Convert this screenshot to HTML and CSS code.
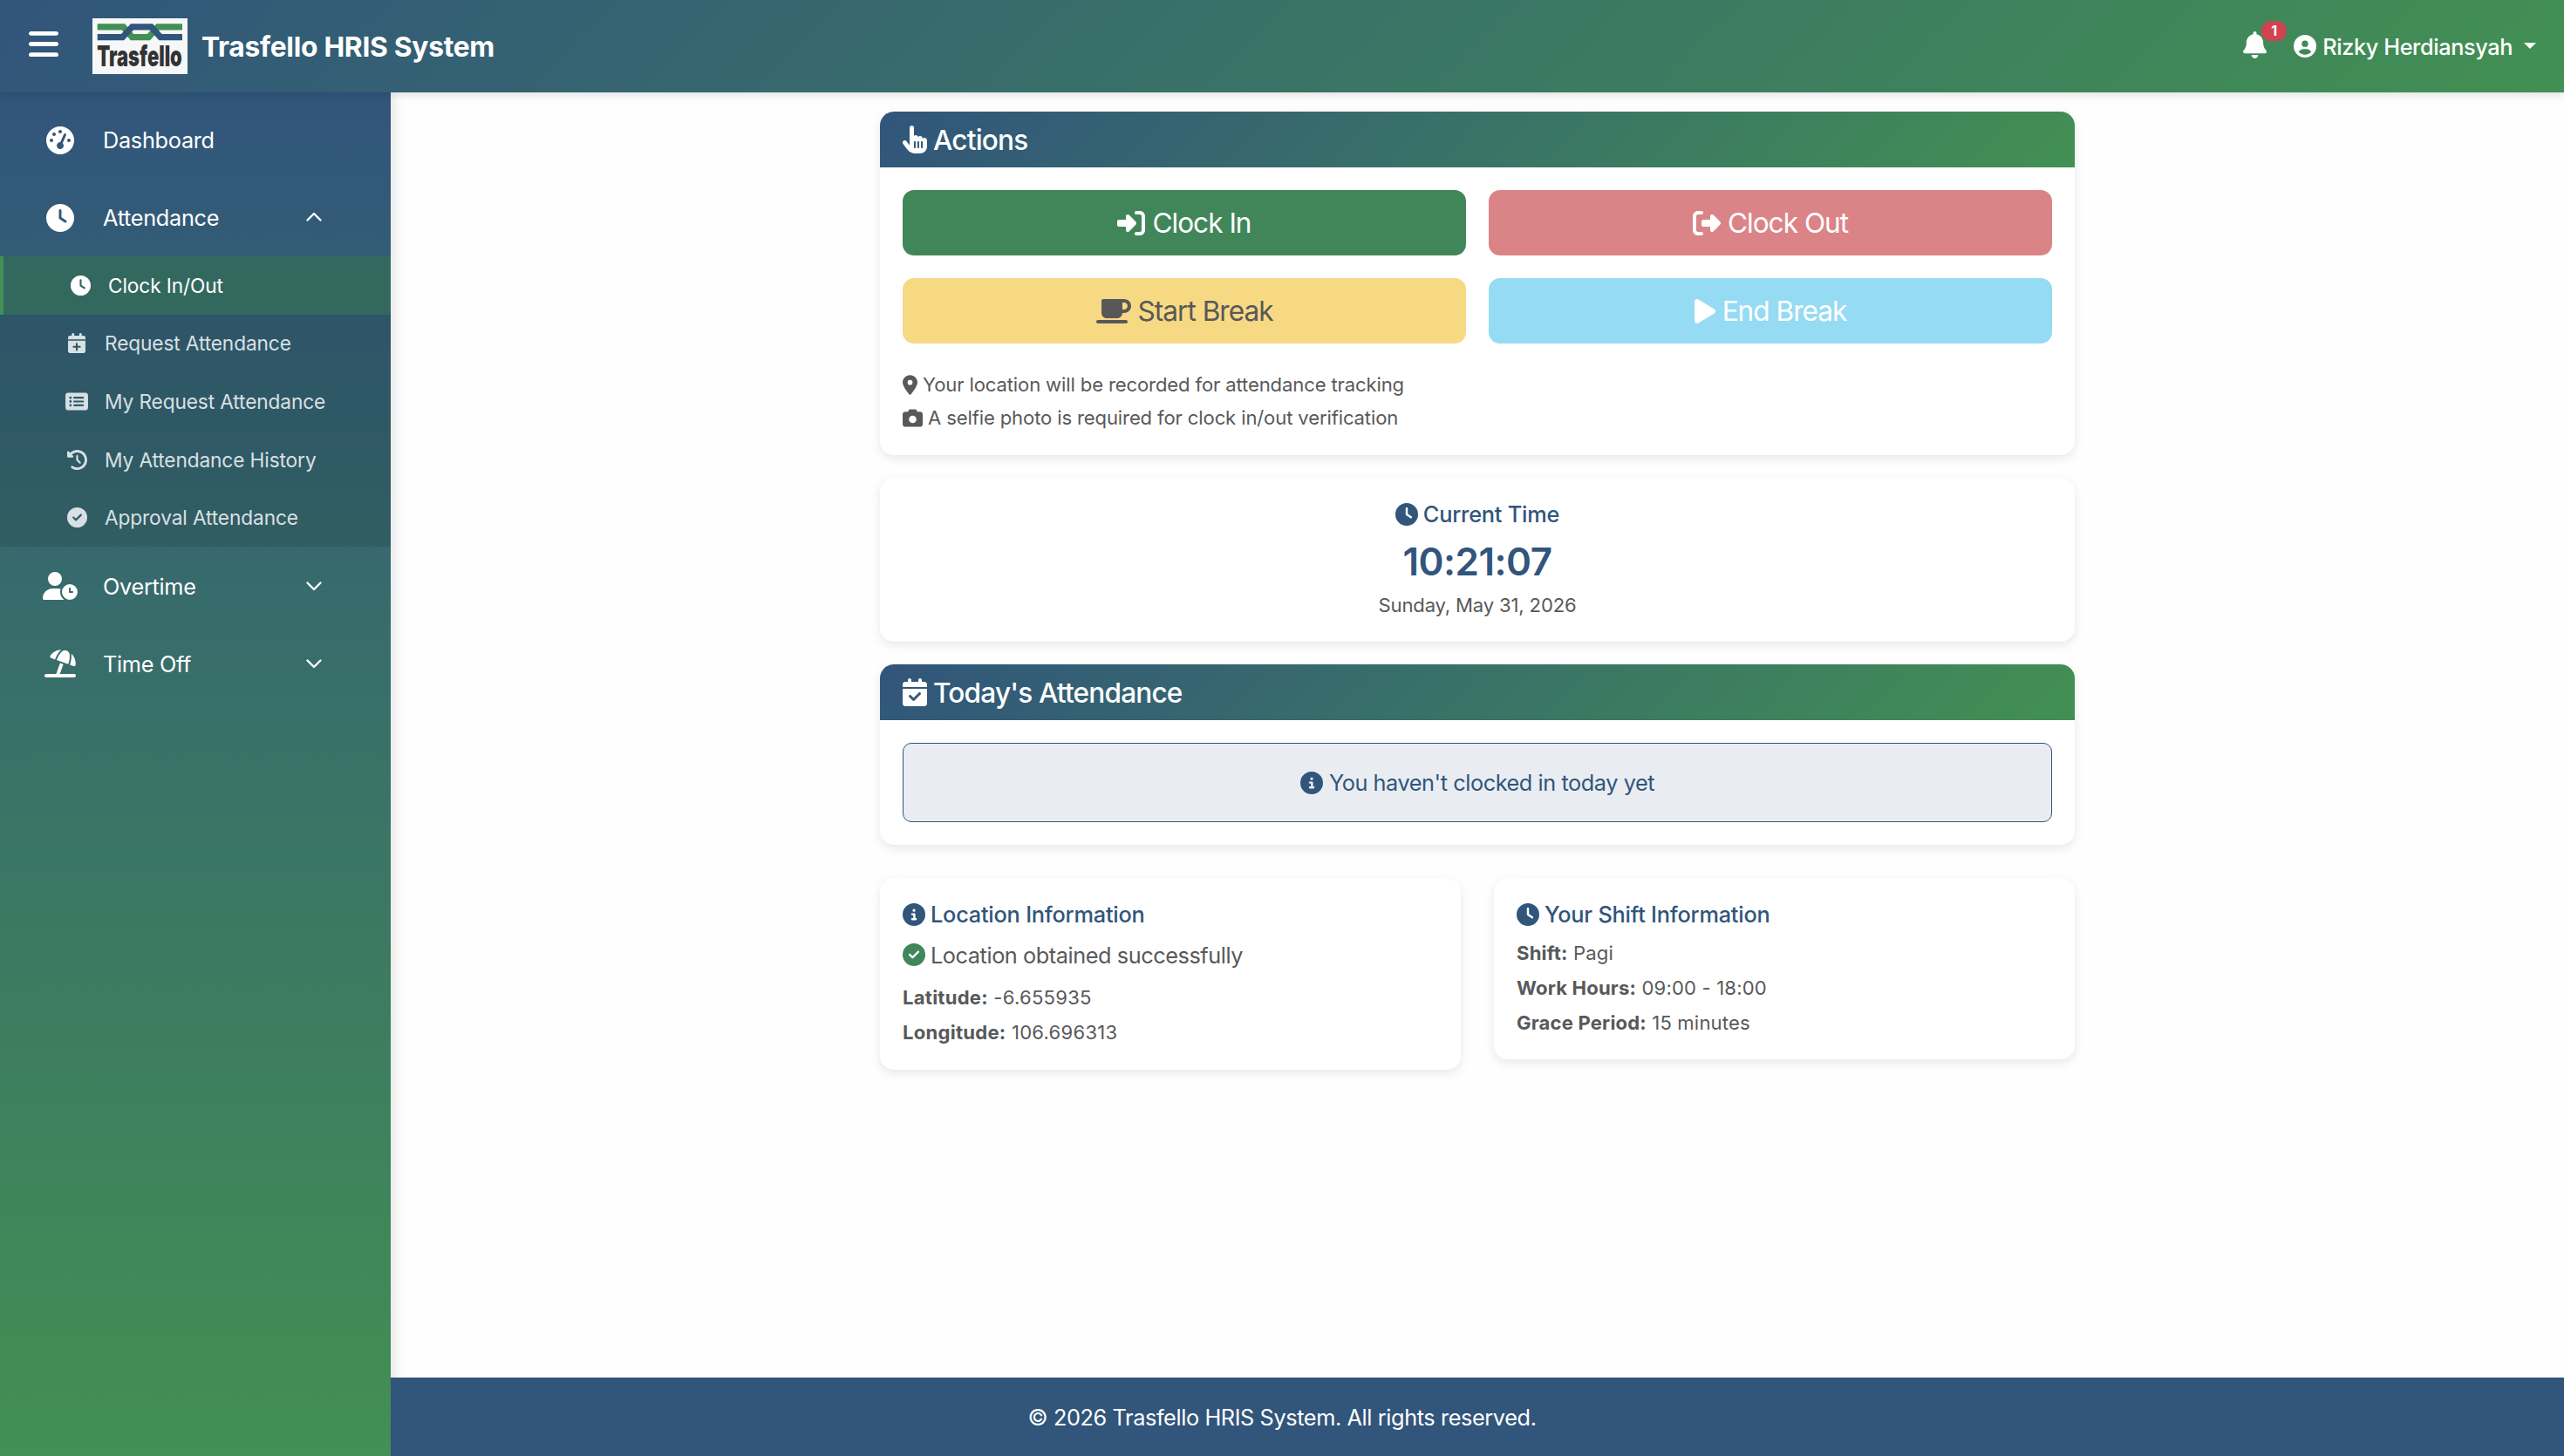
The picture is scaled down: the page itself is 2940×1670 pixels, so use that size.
FILE: index.html
```html
<!DOCTYPE html>
<html lang="en">
<head>
<meta charset="utf-8">
<title>Trasfello HRIS System</title>
<link rel="stylesheet" href="styles.css">
</head>
<body>
<svg class="sprite" aria-hidden="true">
  <symbol id="bars" viewBox="0 0 448 512"><path d="M0 96C0 78.3 14.3 64 32 64H416c17.7 0 32 14.3 32 32s-14.3 32-32 32H32C14.3 128 0 113.7 0 96zM0 256c0-17.7 14.3-32 32-32H416c17.7 0 32 14.3 32 32s-14.3 32-32 32H32c-17.7 0-32-14.3-32-32zM448 416c0 17.7-14.3 32-32 32H32c-17.7 0-32-14.3-32-32s14.3-32 32-32H416c17.7 0 32 14.3 32 32z"/></symbol>
  <symbol id="clock" viewBox="0 0 512 512"><path d="M256 0a256 256 0 1 1 0 512A256 256 0 1 1 256 0zM232 120V256c0 8 4 15.5 10.7 20l96 64c11 7.4 25.9 4.4 33.3-6.7s4.4-25.9-6.7-33.3L280 243.2V120c0-13.3-10.7-24-24-24s-24 10.7-24 24z"/></symbol>
  <symbol id="gauge" viewBox="0 0 512 512"><path d="M0 256a256 256 0 1 1 512 0A256 256 0 1 1 0 256zM288 96a32 32 0 1 0 -64 0 32 32 0 1 0 64 0zM256 416c35.3 0 64-28.7 64-64c0-17.4-6.9-33.1-18.1-44.6L366 161.7c5.3-12.1-.2-26.3-12.3-31.6s-26.3 .2-31.6 12.3L257.9 288c-.6 0-1.3 0-1.9 0c-35.3 0-64 28.7-64 64s28.7 64 64 64zM176 144a32 32 0 1 0 -64 0 32 32 0 1 0 64 0zM96 288a32 32 0 1 0 0-64 32 32 0 1 0 0 64zm352-32a32 32 0 1 0 -64 0 32 32 0 1 0 64 0z"/></symbol>
  <symbol id="calendar-plus" viewBox="0 0 448 512"><path d="M96 32V64H48C21.5 64 0 85.5 0 112v48H448V112c0-26.5-21.5-48-48-48H352V32c0-17.7-14.3-32-32-32s-32 14.3-32 32V64H160V32c0-17.7-14.3-32-32-32S96 14.3 96 32zM448 192H0V464c0 26.5 21.5 48 48 48H400c26.5 0 48-21.5 48-48V192zM224 248c13.3 0 24 10.7 24 24v56h56c13.3 0 24 10.7 24 24s-10.7 24-24 24H248v56c0 13.3-10.7 24-24 24s-24-10.7-24-24V376H144c-13.3 0-24-10.7-24-24s10.7-24 24-24h56V272c0-13.3 10.7-24 24-24z"/></symbol>
  <symbol id="calendar-check" viewBox="0 0 448 512"><path d="M96 32V64H48C21.5 64 0 85.5 0 112v48H448V112c0-26.5-21.5-48-48-48H352V32c0-17.7-14.3-32-32-32s-32 14.3-32 32V64H160V32c0-17.7-14.3-32-32-32S96 14.3 96 32zM448 192H0V464c0 26.5 21.5 48 48 48H400c26.5 0 48-21.5 48-48V192zM329 297L217 409c-9.4 9.4-24.6 9.4-33.9 0l-64-64c-9.4-9.4-9.4-24.6 0-33.9s24.6-9.4 33.9 0l47 47 95-95c9.4-9.4 24.6-9.4 33.9 0s9.4 24.6 0 33.9z"/></symbol>
  <symbol id="list" viewBox="0 0 576 512"><path d="M0 96C0 60.7 28.7 32 64 32H512c35.3 0 64 28.7 64 64V416c0 35.3-28.7 64-64 64H64c-35.3 0-64-28.7-64-64V96zM128 288a32 32 0 1 0 0-64 32 32 0 1 0 0 64zm32-128a32 32 0 1 0 -64 0 32 32 0 1 0 64 0zM128 384a32 32 0 1 0 0-64 32 32 0 1 0 0 64zm96-248c-13.3 0-24 10.7-24 24s10.7 24 24 24H448c13.3 0 24-10.7 24-24s-10.7-24-24-24H224zm0 96c-13.3 0-24 10.7-24 24s10.7 24 24 24H448c13.3 0 24-10.7 24-24s-10.7-24-24-24H224zm0 96c-13.3 0-24 10.7-24 24s10.7 24 24 24H448c13.3 0 24-10.7 24-24s-10.7-24-24-24H224z"/></symbol>
  <symbol id="history" viewBox="0 0 512 512"><path d="M75 75L41 41C25.9 25.9 0 36.6 0 57.9V168c0 13.3 10.7 24 24 24H134.1c21.4 0 32.1-25.9 17-41l-30.8-30.8C155 85.5 203 64 256 64c106 0 192 86 192 192s-86 192-192 192c-40.8 0-78.6-12.7-109.7-34.4c-14.5-10.1-34.4-6.6-44.6 7.9s-6.6 34.4 7.9 44.6C151.2 495 201.7 512 256 512c141.4 0 256-114.6 256-256S397.4 0 256 0C185.3 0 121.3 28.7 75 75zm181 53c-13.3 0-24 10.7-24 24V256c0 6.4 2.5 12.5 7 17l72 72c9.4 9.4 24.6 9.4 33.9 0s9.4-24.6 0-33.9l-65-65V152c0-13.3-10.7-24-24-24z"/></symbol>
  <symbol id="check" viewBox="0 0 512 512"><path d="M256 512A256 256 0 1 0 256 0a256 256 0 1 0 0 512zM369 209L241 337c-9.4 9.4-24.6 9.4-33.9 0l-64-64c-9.4-9.4-9.4-24.6 0-33.9s24.6-9.4 33.9 0l47 47L335 175c9.4-9.4 24.6-9.4 33.9 0s9.4 24.6 0 33.9z"/></symbol>
  <symbol id="info" viewBox="0 0 512 512"><path d="M256 512A256 256 0 1 0 256 0a256 256 0 1 0 0 512zM216 336h24V272H216c-13.3 0-24-10.7-24-24s10.7-24 24-24h48c13.3 0 24 10.7 24 24v88h8c13.3 0 24 10.7 24 24s-10.7 24-24 24H216c-13.3 0-24-10.7-24-24s10.7-24 24-24zm40-208a32 32 0 1 1 0 64 32 32 0 1 1 0-64z"/></symbol>
  <symbol id="user-clock" viewBox="0 0 640 512"><path d="M224 0a128 128 0 1 1 0 256A128 128 0 1 1 224 0zM178.3 304h91.4c20.6 0 40.4 3.5 58.8 9.9C323 331 320 349.1 320 368c0 59.5 29.5 112.1 74.8 144H29.7C13.3 512 0 498.7 0 482.3C0 383.8 79.8 304 178.3 304zM352 368a144 144 0 1 1 288 0 144 144 0 1 1 -288 0zm144-80c-8.8 0-16 7.2-16 16v64c0 8.8 7.2 16 16 16h48c8.8 0 16-7.2 16-16s-7.2-16-16-16H512V304c0-8.8-7.2-16-16-16z"/></symbol>
  <symbol id="beach" viewBox="0 0 576 512"><path d="M346.3 271.8l-60.1-21.9L214 448H32c-17.7 0-32 14.3-32 32s14.3 32 32 32H544c17.7 0 32-14.3 32-32s-14.3-32-32-32H282.1l64.1-176.2zm121.1-.2l-3.3 9.1 67.7 24.6c18.1 6.6 38-4.2 39.6-23.4c6.5-78.5-23.9-155.5-80.8-208.5c2 8 3.2 16.3 3.4 24.8l.2 6c1.8 57-7.3 113.8-26.8 167.4zM462 99.1c-1.1-34.4-22.5-64.8-54.4-77.4c-.9-.4-1.9-.7-2.8-1.1c-33-11.7-69.8-2.4-93.1 23.8l-4 4.5C272.4 88.3 245 134.2 226.8 184l-3.3 9.1L434 269.7l3.3-9.1c18.1-49.8 26.6-102.5 24.9-155.5l-.2-6zM107.2 112.9c-11.1 15.7-2.8 36.8 15.3 43.4l71 25.8 3.3-9.1c19.5-53.6 49.1-103 87.1-145.5l4-4.5c6.2-6.9 13.1-13 20.5-18.2c-79.6 2.5-154.7 42.2-201.2 108z"/></symbol>
  <symbol id="bell" viewBox="0 0 448 512"><path d="M224 0c-17.7 0-32 14.3-32 32V51.2C119 66 64 130.6 64 208v18.8c0 47-17.3 92.4-48.5 127.6l-7.4 8.3c-8.4 9.4-10.4 22.9-5.3 34.4S19.4 416 32 416H416c12.6 0 24-7.4 29.2-18.9s3.1-25-5.3-34.4l-7.4-8.3C401.3 319.2 384 273.9 384 226.8V208c0-77.4-55-142-128-156.8V32c0-17.7-14.3-32-32-32zm45.3 493.3c12-12 18.7-28.3 18.7-45.3H224 160c0 17 6.7 33.3 18.7 45.3s28.3 18.7 45.3 18.7s33.3-6.7 45.3-18.7z"/></symbol>
  <symbol id="user" viewBox="0 0 512 512"><path d="M399 384.2C376.9 345.8 335.4 320 288 320H224c-47.4 0-88.9 25.8-111 64.2c35.2 39.2 86.2 63.8 143 63.8s107.8-24.7 143-63.8zM0 256a256 256 0 1 1 512 0A256 256 0 1 1 0 256zm256 16a72 72 0 1 0 0-144 72 72 0 1 0 0 144z"/></symbol>
  <symbol id="pointer" viewBox="0 0 448 512"><path d="M128 40c0-22.1 17.9-40 40-40s40 17.9 40 40V188.2c8.5-7.6 19.7-12.2 32-12.2c20.6 0 38.2 13 45 31.2c8.8-9.3 21.2-15.2 35-15.2c25.3 0 46 19.5 47.9 44.3c8.5-7.7 19.8-12.3 32.1-12.3c26.5 0 48 21.5 48 48v48 16 48c0 70.7-57.3 128-128 128l-16 0H240l-.1 0h-5.2c-5 0-9.9-.3-14.7-1c-55.3-5.6-106.2-34-140-79L8 336c-13.3-17.7-9.7-42.7 8-56s42.7-9.7 56 8l56 74.7V40zM240 304c0-8.8-7.2-16-16-16s-16 7.2-16 16v96c0 8.8 7.2 16 16 16s16-7.2 16-16V304zm48-16c-8.8 0-16 7.2-16 16v96c0 8.8 7.2 16 16 16s16-7.2 16-16V304c0-8.8-7.2-16-16-16zm80 16c0-8.8-7.2-16-16-16s-16 7.2-16 16v96c0 8.8 7.2 16 16 16s16-7.2 16-16V304z"/></symbol>
  <symbol id="sign-in" viewBox="0 0 512 512"><path d="M217.9 105.9L340.7 228.7c7.2 7.2 11.3 17.1 11.3 27.3s-4.1 20.1-11.3 27.3L217.9 406.1c-6.4 6.4-15 9.9-24 9.9c-18.7 0-33.9-15.2-33.9-33.9l0-62.1L32 320c-17.7 0-32-14.3-32-32l0-64c0-17.7 14.3-32 32-32l128 0 0-62.1c0-18.7 15.2-33.9 33.9-33.9c9 0 17.6 3.6 24 9.9zM352 416l64 0c17.7 0 32-14.3 32-32l0-256c0-17.7-14.3-32-32-32l-64 0c-17.7 0-32-14.3-32-32s14.3-32 32-32l64 0c53 0 96 43 96 96l0 256c0 53-43 96-96 96l-64 0c-17.7 0-32-14.3-32-32s14.3-32 32-32z"/></symbol>
  <symbol id="sign-out" viewBox="0 0 512 512"><path d="M377.9 105.9L500.7 228.7c7.2 7.2 11.3 17.1 11.3 27.3s-4.1 20.1-11.3 27.3L377.9 406.1c-6.4 6.4-15 9.9-24 9.9c-18.7 0-33.9-15.2-33.9-33.9l0-62.1-128 0c-17.7 0-32-14.3-32-32l0-64c0-17.7 14.3-32 32-32l128 0 0-62.1c0-18.7 15.2-33.9 33.9-33.9c9 0 17.6 3.6 24 9.9zM160 96L96 96c-17.7 0-32 14.3-32 32l0 256c0 17.7 14.3 32 32 32l64 0c17.7 0 32 14.3 32 32s-14.3 32-32 32l-64 0c-53 0-96-43-96-96L0 128C0 75 43 32 96 32l64 0c17.7 0 32 14.3 32 32s-14.3 32-32 32z"/></symbol>
  <symbol id="coffee" viewBox="0 0 640 512"><path d="M96 64c0-17.7 14.3-32 32-32H448h64c70.7 0 128 57.3 128 128s-57.3 128-128 128H480c0 53-43 96-96 96H192c-53 0-96-43-96-96V64zM480 224h32c35.3 0 64-28.7 64-64s-28.7-64-64-64H480V224zM32 416H544c17.7 0 32 14.3 32 32s-14.3 32-32 32H32c-17.7 0-32-14.3-32-32s14.3-32 32-32z"/></symbol>
  <symbol id="play" viewBox="0 0 384 512"><path d="M73 39c-14.8-9.1-33.4-9.4-48.5-.9S0 62.6 0 80V432c0 17.4 9.4 33.4 24.5 41.9s33.7 8.1 48.5-.9L361 297c14.3-8.7 23-24.2 23-41s-8.7-32.2-23-41L73 39z"/></symbol>
  <symbol id="pin" viewBox="0 0 384 512"><path d="M215.7 499.2C267 435 384 279.4 384 192C384 86 298 0 192 0S0 86 0 192c0 87.4 117 243 168.3 307.2c12.3 15.3 35.1 15.3 47.4 0zM192 128a64 64 0 1 1 0 128 64 64 0 1 1 0-128z"/></symbol>
  <symbol id="camera" viewBox="0 0 512 512"><path d="M149.1 64.8L138.7 96H64C28.7 96 0 124.7 0 160V416c0 35.3 28.7 64 64 64H448c35.3 0 64-28.7 64-64V160c0-35.3-28.7-64-64-64H373.3L362.9 64.8C356.4 45.2 338.1 32 317.4 32H194.6c-20.7 0-39 13.2-45.5 32.8zM256 192a96 96 0 1 1 0 192 96 96 0 1 1 0-192z"/></symbol>
  <symbol id="chevron-down" viewBox="0 0 20 20"><path d="M2.500 6.500l7.500 7.500L17.500 6.500" fill="none" stroke="currentColor" stroke-width="2.400" stroke-linecap="round" stroke-linejoin="round"/></symbol>
  <symbol id="chevron-up" viewBox="0 0 20 20"><path d="M2.500 12.500l7.500-7.500 7.500 7.500" fill="none" stroke="currentColor" stroke-width="2.400" stroke-linecap="round" stroke-linejoin="round"/></symbol>
</svg>

<header class="topbar">
  <svg class="icon menu-toggle"><use href="#bars"/></svg>
  <svg class="logo" viewBox="0 0 109 64">
    <rect width="109" height="64" fill="#f6f7f8"/>
    <g fill="none" stroke-width="7.200">
      <path stroke="#429053" d="M5.700 9.900H35.500L45.500 21.700H64.500L75 9.900H103"/>
      <path stroke="#31557b" d="M5.700 21.700H34.500L45.500 9.900H67.500L78 21.700H103"/>
    </g>
    <text class="logo-text" transform="translate(5.300 55) scale(.629 1)" textLength="155" lengthAdjust="spacingAndGlyphs">Trasfello</text>
  </svg>
  <span class="brand">Trasfello HRIS System</span>
  <div class="notify">
    <svg class="icon bell"><use href="#bell"/></svg>
    <span class="badge">1</span>
  </div>
  <div class="account">
    <svg class="icon account-icon"><use href="#user"/></svg>
    <span class="account-name">Rizky Herdiansyah</span>
    <i class="caret"></i>
  </div>
</header>

<div class="shell">
  <nav class="sidebar">
    <a class="nav-item"><span class="nav-icon"><svg class="icon i32"><use href="#gauge"/></svg></span><span class="nav-label">Dashboard</span></a>
    <a class="nav-item"><span class="nav-icon"><svg class="icon i32"><use href="#clock"/></svg></span><span class="nav-label">Attendance</span><svg class="chevron"><use href="#chevron-up"/></svg></a>
    <div class="submenu">
      <a class="sub-item active"><span class="sub-icon"><svg class="icon i23"><use href="#clock"/></svg></span><span>Clock In/Out</span></a>
      <a class="sub-item"><span class="sub-icon"><svg class="icon i23 w448"><use href="#calendar-plus"/></svg></span><span>Request Attendance</span></a>
      <a class="sub-item"><span class="sub-icon"><svg class="icon i23 w576"><use href="#list"/></svg></span><span>My Request Attendance</span></a>
      <a class="sub-item"><span class="sub-icon"><svg class="icon i23"><use href="#history"/></svg></span><span>My Attendance History</span></a>
      <a class="sub-item"><span class="sub-icon"><svg class="icon i23"><use href="#check"/></svg></span><span>Approval Attendance</span></a>
    </div>
    <a class="nav-item"><span class="nav-icon"><svg class="icon i32 w640"><use href="#user-clock"/></svg></span><span class="nav-label">Overtime</span><svg class="chevron"><use href="#chevron-down"/></svg></a>
    <a class="nav-item"><span class="nav-icon"><svg class="icon i32 w576"><use href="#beach"/></svg></span><span class="nav-label">Time Off</span><svg class="chevron"><use href="#chevron-down"/></svg></a>
  </nav>

  <div class="page">
    <main class="content">
      <section class="card">
        <h2 class="card-header"><svg class="icon i32 w448"><use href="#pointer"/></svg><span>Actions</span></h2>
        <div class="card-body">
          <div class="actions">
            <button class="btn btn-in"><svg class="icon i32"><use href="#sign-in"/></svg><span>Clock In</span></button>
            <button class="btn btn-out"><svg class="icon i32"><use href="#sign-out"/></svg><span>Clock Out</span></button>
            <button class="btn btn-start"><svg class="icon i32 w640"><use href="#coffee"/></svg><span>Start Break</span></button>
            <button class="btn btn-end"><svg class="icon i32 w384"><use href="#play"/></svg><span>End Break</span></button>
          </div>
          <div class="notes">
            <p class="note"><svg class="icon i23 w384"><use href="#pin"/></svg><span>Your location will be recorded for attendance tracking</span></p>
            <p class="note"><svg class="icon i23"><use href="#camera"/></svg><span>A selfie photo is required for clock in/out verification</span></p>
          </div>
        </div>
      </section>

      <section class="card time-card">
        <h3 class="title"><svg class="icon i26"><use href="#clock"/></svg><span>Current Time</span></h3>
        <div class="time">10:21:07</div>
        <div class="date">Sunday, May 31, 2026</div>
      </section>

      <section class="card">
        <h2 class="card-header"><svg class="icon i32 w448"><use href="#calendar-check"/></svg><span>Today's Attendance</span></h2>
        <div class="card-body">
          <div class="alert"><svg class="icon i26"><use href="#info"/></svg><span>You haven't clocked in today yet</span></div>
        </div>
      </section>

      <div class="info-row">
        <section class="card info-card">
          <h3 class="title"><svg class="icon i26"><use href="#info"/></svg><span>Location Information</span></h3>
          <p class="status"><svg class="icon i26 ok"><use href="#check"/></svg><span>Location obtained successfully</span></p>
          <p class="fact"><strong>Latitude:</strong> -6.655935</p>
          <p class="fact"><strong>Longitude:</strong> 106.696313</p>
        </section>
        <section class="card info-card">
          <h3 class="title"><svg class="icon i26"><use href="#clock"/></svg><span>Your Shift Information</span></h3>
          <p class="fact"><strong>Shift:</strong> Pagi</p>
          <p class="fact"><strong>Work Hours:</strong> 09:00 - 18:00</p>
          <p class="fact"><strong>Grace Period:</strong> 15 minutes</p>
        </section>
      </div>
    </main>
  </div>
</div>
<footer class="footer">© 2026 Trasfello HRIS System. All rights reserved.</footer>
</body>
</html>
```
FILE: styles.css
```css
:root {
  --blue: #31557b;
  --green: #429053;
  --text: #58595a;
}

* { box-sizing: border-box; }

body {
  margin: 0;
  height: 1670px;
  display: grid;
  grid-template-rows: 106px 1474px 90px;
  overflow: hidden;
  background: #fefefe;
  color: var(--text);
  font-family: Inter, "Liberation Sans", sans-serif;
  font-size: 25.3px;
}

h2, h3, p { margin: 0; }

.sprite { position: absolute; width: 0; height: 0; }

.icon { fill: currentColor; flex: none; display: block; }
.i32 { width: 32px; height: 32px; }
.i26 { width: 26px; height: 26px; }
.i23 { width: 23px; height: 23px; }
.i32.w384 { width: 24px; }
.i32.w448 { width: 28px; }
.i32.w576 { width: 36px; }
.i32.w640 { width: 40px; }
.i23.w384 { width: 17px; }
.i23.w448 { width: 20px; }
.i23.w576 { width: 26px; }

/* Top bar */
.topbar {
  position: relative;
  z-index: 3;
  display: flex;
  align-items: center;
  padding: 0 32px 0 33px;
  color: #fff;
  background: linear-gradient(135deg, var(--blue), var(--green));
  box-shadow: 0 4px 8px rgba(0, 0, 0, .1);
}
.menu-toggle { width: 34px; height: 39px; margin: 0 39px 5px 0; }
.logo { width: 109px; height: 64px; margin-right: 16px; }
.logo-text { font-weight: 900; font-size: 33.4px; fill: #333; }
.brand { font-size: 31.8px; font-weight: 700; letter-spacing: -.3px; }
.notify { position: relative; margin: 0 31px 3px auto; }
.bell { width: 27px; height: 31px; }
.badge {
  position: absolute;
  left: 21px;
  top: -12px;
  width: 29px;
  height: 23px;
  border-radius: 12px;
  background: #d04350;
  font-size: 16px;
  font-weight: 700;
  line-height: 23px;
  text-align: center;
}
.account { display: flex; align-items: center; font-weight: 500; letter-spacing: -.4px; }
.account-icon { width: 26px; height: 26px; margin-right: 7px; }
.caret {
  margin: 0 0 2px 13px;
  border: 7px solid transparent;
  border-top-color: #fff;
  border-bottom: 0;
}

/* Sidebar */
.shell { display: flex; align-items: flex-start; }
.sidebar {
  position: relative;
  z-index: 2;
  flex: none;
  width: 448px;
  height: 1564px;
  padding-top: 10px;
  color: #fff;
  background: linear-gradient(180deg, var(--blue), var(--green));
  box-shadow: 4px 0 12px rgba(0, 0, 0, .1);
}
.nav-item { display: flex; align-items: center; height: 89px; padding: 0 78px 0 44px; letter-spacing: -.3px; }
.submenu + .nav-item { margin-top: 1px; }
.nav-icon { width: 49px; margin-right: 25px; display: flex; justify-content: center; }
.chevron { width: 20px; height: 20px; margin-left: auto; }
.submenu { background: rgba(0, 0, 0, .1); color: #d8e0e3; font-size: 22.7px; letter-spacing: -.12px; }
.sub-item { display: flex; align-items: center; height: 66.6px; padding-left: 72px; }
.sub-icon { width: 32px; margin-right: 16px; display: flex; justify-content: center; }
.sub-item.active { color: #fff; border-left: 4px solid var(--green); background: #33685f; }

/* Content */
.page { flex: 1; display: flex; justify-content: center; padding-top: 22px; }
.content { width: 1370px; display: flex; flex-direction: column; gap: 26px; }
.card { background: #fff; border-radius: 16px; box-shadow: 0 4px 12px rgba(0, 0, 0, .09); }
.card-header {
  display: flex;
  align-items: center;
  gap: 7px;
  height: 64px;
  padding: 0 26px;
  border-radius: 16px 16px 0 0;
  color: #fff;
  font-size: 31.6px;
  font-weight: 500;
  letter-spacing: -.83px;
  background: linear-gradient(135deg, var(--blue), var(--green));
}
.card-body { padding: 26px; }
.actions { display: grid; grid-template-columns: 1fr 1fr; gap: 26px; }
.btn {
  display: flex;
  align-items: center;
  justify-content: center;
  gap: 8px;
  height: 75px;
  border: 0;
  border-radius: 13px;
  color: #fff;
  font: 400 31.6px Inter, "Liberation Sans", sans-serif;
  letter-spacing: -1px;
}
.btn-in { background: #418659; }
.btn-out { background: #db8488; }
.btn-start { background: #f7d983; color: #585858; }
.btn-end { background: #96dbf4; }
.notes { padding-top: 28px; height: 102px; font-size: 22.1px; letter-spacing: -.14px; }
.note { display: flex; align-items: center; gap: 6px; height: 38px; }

.title {
  display: flex;
  align-items: center;
  gap: 6px;
  height: 31px;
  color: var(--blue);
  font-size: 25.3px;
  font-weight: 500;
  letter-spacing: -.21px;
}
.time-card { display: flex; flex-direction: column; align-items: center; height: 188px; padding-top: 26px; }
.time {
  height: 56px;
  margin-top: 11px;
  line-height: 56px;
  color: var(--blue);
  font-size: 44px;
  font-weight: 600;
  letter-spacing: -.5px;
}
.date { height: 34px; margin-top: 5px; line-height: 34px; font-size: 22.1px; letter-spacing: -.17px; }

.alert {
  display: flex;
  align-items: center;
  justify-content: center;
  gap: 7px;
  height: 91px;
  border: 1px solid var(--blue);
  border-radius: 10px;
  color: var(--blue);
  background: #e9edf2;
  letter-spacing: -.44px;
}

.info-row { display: grid; grid-template-columns: 1fr 1fr; gap: 38px; align-items: start; margin-top: 12px; }
.info-card { padding: 26px 26px 22px; }
.info-card .title { margin-bottom: 9px; }
.status { display: flex; align-items: center; gap: 6px; height: 44px; margin-bottom: 7px; letter-spacing: -.44px; }
.status ~ .fact { letter-spacing: .24px; }
.status ~ .fact:last-child { margin-bottom: 1px; }
.ok { color: #418659; }
.fact { height: 40px; line-height: 40px; font-size: 22.1px; letter-spacing: .16px; }

/* Footer: starts at the sidebar's edge, text centred on the whole window */
.footer {
  position: relative;
  z-index: 3;
  display: flex;
  align-items: center;
  justify-content: center;
  margin-left: 448px;
  padding-right: 448px;
  color: #fff;
  background: var(--blue);
  letter-spacing: -.4px;
}
```
